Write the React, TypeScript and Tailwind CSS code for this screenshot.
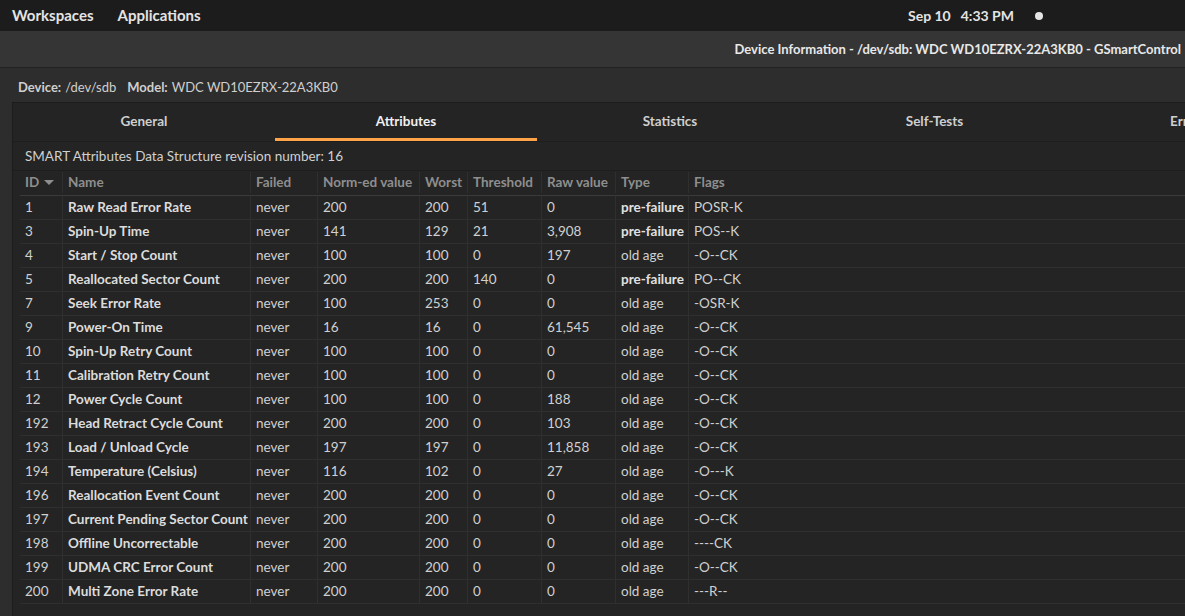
import React from "react"

type Row = {
    id: string
    name: string
    norm: string
    worst: string
    thr: string
    raw: string
    type: string
    flags: string
}

const rows: Row[] = [
    { id: "1", name: "Raw Read Error Rate", norm: "200", worst: "200", thr: "51", raw: "0", type: "pre-failure", flags: "POSR-K" },
    { id: "3", name: "Spin-Up Time", norm: "141", worst: "129", thr: "21", raw: "3,908", type: "pre-failure", flags: "POS--K" },
    { id: "4", name: "Start / Stop Count", norm: "100", worst: "100", thr: "0", raw: "197", type: "old age", flags: "-O--CK" },
    { id: "5", name: "Reallocated Sector Count", norm: "200", worst: "200", thr: "140", raw: "0", type: "pre-failure", flags: "PO--CK" },
    { id: "7", name: "Seek Error Rate", norm: "100", worst: "253", thr: "0", raw: "0", type: "old age", flags: "-OSR-K" },
    { id: "9", name: "Power-On Time", norm: "16", worst: "16", thr: "0", raw: "61,545", type: "old age", flags: "-O--CK" },
    { id: "10", name: "Spin-Up Retry Count", norm: "100", worst: "100", thr: "0", raw: "0", type: "old age", flags: "-O--CK" },
    { id: "11", name: "Calibration Retry Count", norm: "100", worst: "100", thr: "0", raw: "0", type: "old age", flags: "-O--CK" },
    { id: "12", name: "Power Cycle Count", norm: "100", worst: "100", thr: "0", raw: "188", type: "old age", flags: "-O--CK" },
    { id: "192", name: "Head Retract Cycle Count", norm: "200", worst: "200", thr: "0", raw: "103", type: "old age", flags: "-O--CK" },
    { id: "193", name: "Load / Unload Cycle", norm: "197", worst: "197", thr: "0", raw: "11,858", type: "old age", flags: "-O--CK" },
    { id: "194", name: "Temperature (Celsius)", norm: "116", worst: "102", thr: "0", raw: "27", type: "old age", flags: "-O---K" },
    { id: "196", name: "Reallocation Event Count", norm: "200", worst: "200", thr: "0", raw: "0", type: "old age", flags: "-O--CK" },
    { id: "197", name: "Current Pending Sector Count", norm: "200", worst: "200", thr: "0", raw: "0", type: "old age", flags: "-O--CK" },
    { id: "198", name: "Offline Uncorrectable", norm: "200", worst: "200", thr: "0", raw: "0", type: "old age", flags: "----CK" },
    { id: "199", name: "UDMA CRC Error Count", norm: "200", worst: "200", thr: "0", raw: "0", type: "old age", flags: "-O--CK" },
    { id: "200", name: "Multi Zone Error Rate", norm: "200", worst: "200", thr: "0", raw: "0", type: "old age", flags: "---R--" },
]

const tabs = [
    { label: "General", w: "w-[262px]" },
    { label: "Attributes", w: "w-[262px]" },
    { label: "Statistics", w: "w-[266px]" },
    { label: "Self-Tests", w: "w-[263px]" },
    { label: "Error Log", w: "w-[263px]" },
]

const cols = "grid grid-cols-[43px_188px_67px_102px_48px_74px_74px_73px_1fr]"
const cell = "pl-[5px] border-r border-[#2f2f2f] whitespace-nowrap overflow-hidden"

export default function App() {
    return (
        <div className="w-[1185px] h-[616px] overflow-hidden bg-[#2d2d2d] text-[#d6d6d6] font-['Lato','Liberation_Sans',sans-serif] flex flex-col">
            {/* top panel */}
            <div className="h-[31px] shrink-0 bg-[#1c1c1c] flex items-center text-[15px] font-bold text-[#e4e4e4] relative">
                <span className="ml-[12px]">Workspaces</span>
                <span className="ml-[24px]">Applications</span>
                <div className="absolute left-[908px] top-0 h-full flex items-center text-[14px]">
                    <span>Sep 10</span>
                    <span className="ml-[10px]">4:33 PM</span>
                    <span className="ml-[21px] w-[8px] h-[8px] rounded-full bg-[#e4e4e4]" />
                </div>
            </div>

            {/* header bar */}
            <div className="h-[37px] shrink-0 bg-[#353535] border-b border-[#222] flex items-center justify-end pr-[4px] pt-[2px]">
                <span className="text-[13px] font-bold text-[#e8e8e8] whitespace-nowrap">
                    Device Information - /dev/sdb: WDC WD10EZRX-22A3KB0 - GSmartControl
                </span>
            </div>

            {/* body */}
            <div className="flex-1 flex flex-col min-h-0">
                <div className="h-[34px] shrink-0 flex items-center pt-[6px] pl-[18px] text-[13px] text-[#cfcfcf]">
                    <span className="font-bold">Device:</span>
                    <span className="ml-[4px]">/dev/sdb</span>
                    <span className="font-bold ml-[11px]">Model:</span>
                    <span className="ml-[4px]">WDC WD10EZRX-22A3KB0</span>
                </div>

                <div className="flex-1 ml-[12px] bg-[#242424] border-l border-t border-[#1c1c1c] flex flex-col min-h-0">
                    {/* tabs */}
                    <div className="h-[39px] shrink-0 flex border-b border-[#1e1e1e]">
                        {tabs.map((t, i) => (
                            <div
                                key={t.label}
                                className={
                                    t.w +
                                    " shrink-0 flex items-center justify-center pt-[2px] text-[13.5px] font-bold border-b-[3px] " +
                                    (i === 1 ? "border-[#ffa348] text-[#f0f0f0]" : "border-transparent text-[#cfcfcf]")
                                }
                            >
                                {t.label}
                            </div>
                        ))}
                    </div>

                    <div className="h-[29px] shrink-0 flex items-center pl-[12px] text-[13.5px] text-[#d0d0d0] border-b border-[#1e1e1e]">
                        SMART Attributes Data Structure revision number: 16
                    </div>

                    {/* table */}
                    <div className="ml-[7px] text-[13.5px]">
                        <div className={cols + " h-[25px] items-center pb-[1px] font-bold text-[#8e8e8e] border-b border-[#3a3a3a]"}>
                            <div className={cell + " flex items-center"}>
                                ID
                                <svg width="10" height="6" viewBox="0 0 10 6" className="ml-[5px]">
                                    <path d="M0 0 L10 0 L5 5 Z" fill="#8e8e8e" />
                                </svg>
                            </div>
                            <div className={cell}>Name</div>
                            <div className={cell}>Failed</div>
                            <div className={cell}>Norm-ed value</div>
                            <div className={cell}>Worst</div>
                            <div className={cell}>Threshold</div>
                            <div className={cell}>Raw value</div>
                            <div className={cell}>Type</div>
                            <div className={cell + " border-r-0"}>Flags</div>
                        </div>
                        {rows.map((r) => (
                            <div key={r.id} className={cols + " h-[24px] items-stretch border-b border-[#2f2f2f] text-[#d0d0d0]"}>
                                <div className={cell + " flex items-center"}>{r.id}</div>
                                <div className={cell + " flex items-center font-bold text-[#dcdcdc]"}>{r.name}</div>
                                <div className={cell + " flex items-center"}>never</div>
                                <div className={cell + " flex items-center"}>{r.norm}</div>
                                <div className={cell + " flex items-center"}>{r.worst}</div>
                                <div className={cell + " flex items-center"}>{r.thr}</div>
                                <div className={cell + " flex items-center"}>{r.raw}</div>
                                <div className={cell + " flex items-center" + (r.type === "pre-failure" ? " font-bold text-[#e0e0e0]" : "")}>
                                    {r.type}
                                </div>
                                <div className={cell + " flex items-center border-r-0"}>{r.flags}</div>
                            </div>
                        ))}
                    </div>
                </div>
            </div>
        </div>
    )
}
